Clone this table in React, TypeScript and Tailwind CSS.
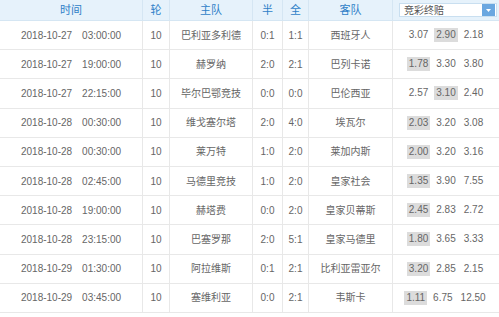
import React from "react";

type Row = {
  d: string;
  t: string;
  home: string;
  half: string;
  full: string;
  away: string;
  odds: [string, string, string];
  hi: number;
};

const rows: Row[] = [
  { d: "2018-10-27", t: "03:00:00", home: "巴利亚多利德", half: "0:1", full: "1:1", away: "西班牙人", odds: ["3.07", "2.90", "2.18"], hi: 1 },
  { d: "2018-10-27", t: "19:00:00", home: "赫罗纳", half: "2:0", full: "2:1", away: "巴列卡诺", odds: ["1.78", "3.30", "3.80"], hi: 0 },
  { d: "2018-10-27", t: "22:15:00", home: "毕尔巴鄂竞技", half: "0:0", full: "0:0", away: "巴伦西亚", odds: ["2.57", "3.10", "2.40"], hi: 1 },
  { d: "2018-10-28", t: "00:30:00", home: "维戈塞尔塔", half: "2:0", full: "4:0", away: "埃瓦尔", odds: ["2.03", "3.20", "3.08"], hi: 0 },
  { d: "2018-10-28", t: "00:30:00", home: "莱万特", half: "1:0", full: "2:0", away: "莱加内斯", odds: ["2.00", "3.20", "3.16"], hi: 0 },
  { d: "2018-10-28", t: "02:45:00", home: "马德里竞技", half: "1:0", full: "2:0", away: "皇家社会", odds: ["1.35", "3.90", "7.55"], hi: 0 },
  { d: "2018-10-28", t: "19:00:00", home: "赫塔费", half: "0:0", full: "2:0", away: "皇家贝蒂斯", odds: ["2.45", "2.83", "2.72"], hi: 0 },
  { d: "2018-10-28", t: "23:15:00", home: "巴塞罗那", half: "2:0", full: "5:1", away: "皇家马德里", odds: ["1.80", "3.65", "3.33"], hi: 0 },
  { d: "2018-10-29", t: "01:30:00", home: "阿拉维斯", half: "0:1", full: "2:1", away: "比利亚雷亚尔", odds: ["3.20", "2.85", "2.15"], hi: 0 },
  { d: "2018-10-29", t: "03:45:00", home: "塞维利亚", half: "0:0", full: "2:1", away: "韦斯卡", odds: ["1.11", "6.75", "12.50"], hi: 0 },
];

const font = { fontFamily: '"Liberation Sans", Arial, "Noto Sans CJK SC", sans-serif' };

export default function App() {
  return (
    <div className="w-[499px] h-[317px] bg-white overflow-hidden text-[10px]" style={font}>
      <div className="flex h-[21px] bg-[#e6f2fb] text-[#2f7fc8] border-b border-[#d5e6f3] text-[11px]">
        <div className="w-[143px] flex items-center justify-center border-r border-[#d5e6f3]">时间</div>
        <div className="w-[27px] flex items-center justify-center border-r border-[#d5e6f3]">轮</div>
        <div className="w-[83px] flex items-center justify-center border-r border-[#d5e6f3]">主队</div>
        <div className="w-[30px] flex items-center justify-center border-r border-[#d5e6f3]">半</div>
        <div className="w-[26px] flex items-center justify-center border-r border-[#d5e6f3]">全</div>
        <div className="w-[84px] flex items-center justify-center border-r border-[#d5e6f3]">客队</div>
        <div className="flex-1 flex items-center pl-[6px] pr-[2px]">
          <div className="flex-1 h-[14px] bg-white border border-[#c9dff0] flex items-center justify-between pl-[4px]">
            <span className="text-[#555] text-[10px]">竞彩终赔</span>
            <span className="w-[13px] h-[12px] bg-[#6aa7e0] flex items-center justify-center mr-[1px]">
              <svg width="5" height="3" viewBox="0 0 5 3">
                <path d="M0 0 L5 0 L2.5 3 Z" fill="#fff" />
              </svg>
            </span>
          </div>
        </div>
      </div>
      {rows.map((r, i) => (
        <div key={i} className="flex h-[29.2px] border-b border-[#e8e8e8] text-[#666]">
          <div className="w-[143px] flex items-center justify-center gap-[10px] border-r border-[#e8e8e8]">
            <span>{r.d}</span>
            <span>{r.t}</span>
          </div>
          <div className="w-[27px] flex items-center justify-center border-r border-[#e8e8e8]">10</div>
          <div className="w-[83px] flex items-center justify-center border-r border-[#e8e8e8]">{r.home}</div>
          <div className="w-[30px] flex items-center justify-center border-r border-[#e8e8e8]">{r.half}</div>
          <div className="w-[26px] flex items-center justify-center border-r border-[#e8e8e8]">{r.full}</div>
          <div className="w-[84px] flex items-center justify-center border-r border-[#e8e8e8]">{r.away}</div>
          <div className="flex-1 flex items-center justify-center gap-[4px]">
            {r.odds.map((o, j) => (
              <span
                key={j}
                className={j === r.hi ? "px-[2px] h-[14px] leading-[14px] bg-[#dcdcdc]" : "px-[2px] h-[14px] leading-[14px]"}
              >
                {o}
              </span>
            ))}
          </div>
        </div>
      ))}
    </div>
  );
}
